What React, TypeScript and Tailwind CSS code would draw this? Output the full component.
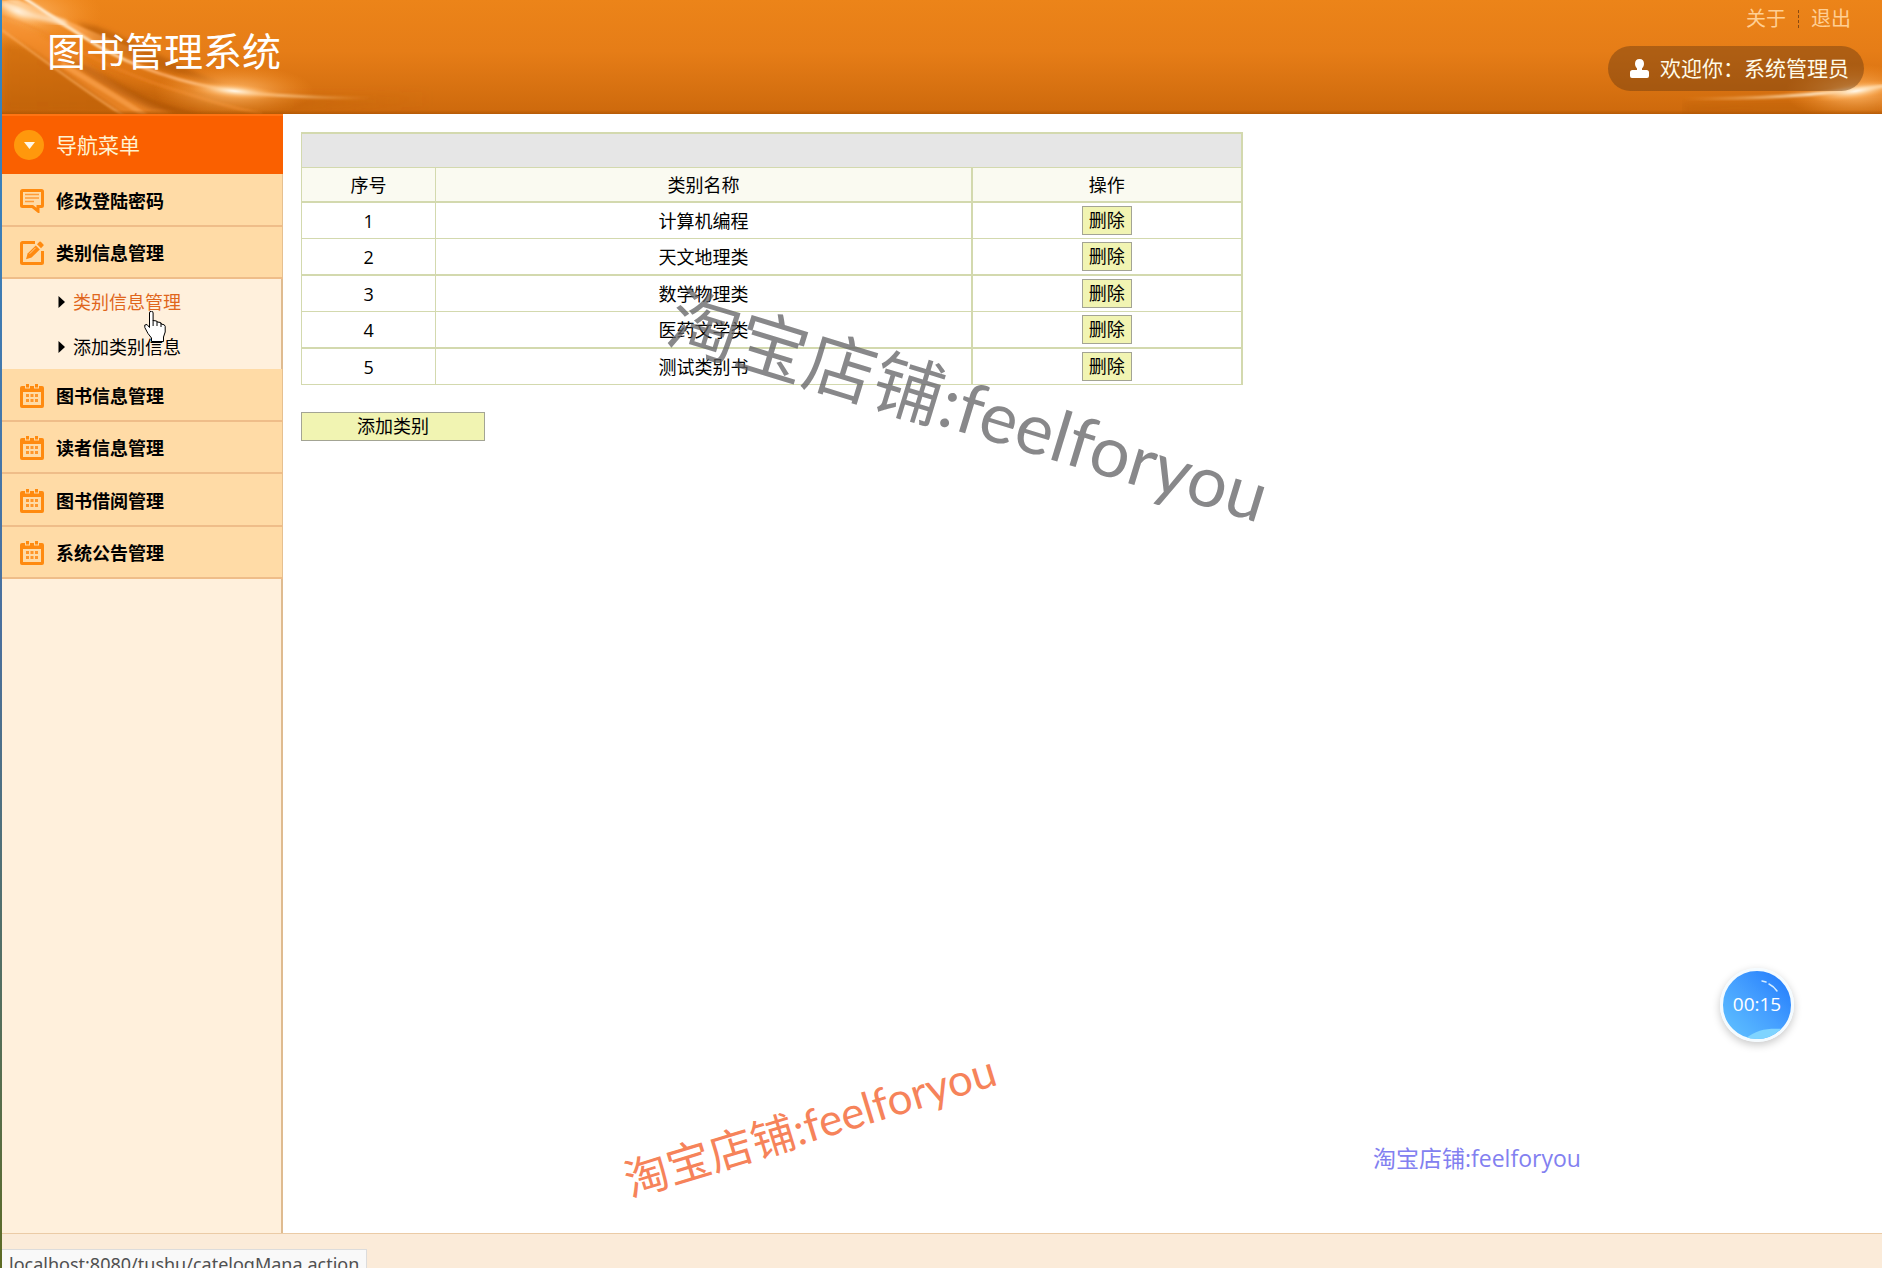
import React, { useState } from "react";

interface SubItem {
  label: string,
  href: string
}

interface MenuEntry {
  label: string,
  icon: React.ReactNode,
  children?: SubItem[]
}

interface Category {
  id: number,
  name: string
}

const NoteIcon: React.FC = () => (
  <svg viewBox="0 0 24 24" className="size-6 shrink-0" aria-hidden="true">
    <path d="M2.5 1.5h19a1 1 0 0 1 1 1v14a1 1 0 0 1-1 1H18v4.5l-5.5-4.5h-10a1 1 0 0 1-1-1v-14a1 1 0 0 1 1-1z" fill="none" stroke="#ff8a0f" strokeWidth="3" />
    <path d="M5 5.5h14M5 9h14M5 12.5h9" stroke="#ff9c38" strokeWidth="1.4" />
  </svg>
);

const EditIcon: React.FC = () => (
  <svg viewBox="0 0 24 24" className="size-6 shrink-0" aria-hidden="true">
    <path d="M15 1.5H2.5a1 1 0 0 0-1 1v19a1 1 0 0 0 1 1h19a1 1 0 0 0 1-1V10" fill="none" stroke="#ff8a0f" strokeWidth="3" />
    <path d="M6 18.2l1.6-5.6 8.2-8.2 4 4-8.2 8.2z" fill="#ff8a0f" />
    <path d="M17 3.2l2.4-2.4a1 1 0 0 1 1.4 0L23.4 3.4a1 1 0 0 1 0 1.4L21 7.2z" fill="#ff8a0f" />
    <path d="M9.6 12.8l6-6" stroke="#ffdba6" strokeWidth="0.8" />
  </svg>
);

const CalendarIcon: React.FC = () => (
  <svg viewBox="0 0 24 24" className="size-6 shrink-0" aria-hidden="true">
    <path fillRule="evenodd" d="M0 4a2 2 0 0 1 2-2h3v2.500h5V2h4v2.500h5V2h3a2 2 0 0 1 2 2v18a2 2 0 0 1-2 2H2a2 2 0 0 1-2-2zM3 8v13h18V8z" fill="#ff8a0f" />
    <path d="M6 0h3v3.500H6zM15 0h3v3.500h-3z" fill="#ff8a0f" />
    <path d="M6 10h3v3H6zM10.500 10h3v3h-3zM15 10h3v3h-3zM6 15h3v3H6zM10.500 15h3v3h-3zM15 15h3v3h-3z" fill="#ff962a" />
  </svg>
);

const menu: MenuEntry[] = [
  { label: "修改登陆密码", icon: <NoteIcon /> },
  {
    label: "类别信息管理",
    icon: <EditIcon />,
    children: [
      { label: "类别信息管理", href: "#catelogMana" },
      { label: "添加类别信息", href: "#catelogAdd" },
    ],
  },
  { label: "图书信息管理", icon: <CalendarIcon /> },
  { label: "读者信息管理", icon: <CalendarIcon /> },
  { label: "图书借阅管理", icon: <CalendarIcon /> },
  { label: "系统公告管理", icon: <CalendarIcon /> },
];

const initialCategories: Category[] = [
  { id: 1, name: "计算机编程" },
  { id: 2, name: "天文地理类" },
  { id: 3, name: "数学物理类" },
  { id: 4, name: "医药文学类" },
  { id: 5, name: "测试类别书" },
];

const HeaderArt: React.FC = () => (
  <>
    <svg viewBox="0 0 480 114" className="absolute left-0 top-0 h-full w-[480px]" aria-hidden="true">
      <defs>
        <radialGradient id="flare">
          <stop offset="0" stopColor="#fff8ec" />
          <stop offset="0.3" stopColor="#ffdcae" stopOpacity="0.8" />
          <stop offset="1" stopColor="#ff9a30" stopOpacity="0" />
        </radialGradient>
        <radialGradient id="glow">
          <stop offset="0" stopColor="#ffc07a" stopOpacity="0.9" />
          <stop offset="1" stopColor="#ff9a30" stopOpacity="0" />
        </radialGradient>
        <linearGradient id="streak" x1="0" x2="1">
          <stop offset="0" stopColor="#fff2dd" />
          <stop offset="0.25" stopColor="#ffd7a4" />
          <stop offset="0.4" stopColor="#f9a55a" />
          <stop offset="0.62" stopColor="#fff4e2" />
          <stop offset="1" stopColor="#ffb050" stopOpacity="0" />
        </linearGradient>
        <linearGradient id="beam" x1="0" x2="1" y1="0" y2="0.6">
          <stop offset="0" stopColor="#ffdfb6" />
          <stop offset="0.45" stopColor="#ffab58" stopOpacity="0.8" />
          <stop offset="1" stopColor="#f08c2c" stopOpacity="0" />
        </linearGradient>
        <linearGradient id="streakRight" x1="0" x2="1">
          <stop offset="0" stopColor="#ffb050" stopOpacity="0" />
          <stop offset="0.7" stopColor="#fff0d8" />
          <stop offset="1" stopColor="#ffe3bd" />
        </linearGradient>
        <linearGradient id="shade" x1="0" x2="1">
          <stop offset="0" stopColor="#a85200" stopOpacity="0.3" />
          <stop offset="0.5" stopColor="#a85200" stopOpacity="0.35" />
          <stop offset="1" stopColor="#b86000" stopOpacity="0" />
        </linearGradient>
        <filter id="soft1"><feGaussianBlur stdDeviation="0.8" /></filter>
        <filter id="soft2"><feGaussianBlur stdDeviation="2" /></filter>
        <filter id="soft4"><feGaussianBlur stdDeviation="5" /></filter>
      </defs>
      <path d="M0 34C60 62 130 98 230 96 300 97 380 96 430 90L430 106 200 114 0 114z" fill="url(#shade)" filter="url(#soft4)" />
      <path d="M74 22C110 26 140 50 230 88L160 70 100 46z" fill="#a04c00" fillOpacity="0.45" filter="url(#soft2)" />
      <ellipse cx="20" cy="14" rx="80" ry="36" fill="url(#glow)" />
      <path d="M0 18C44 34 84 62 110 82 130 96 150 106 172 114L120 114C80 86 40 54 0 30z" fill="#f58f2c" fillOpacity="0.7" filter="url(#soft2)" />
      <path d="M60 56C90 62 110 84 160 104L200 114 150 110C110 92 84 74 60 56z" fill="#984600" fillOpacity="0.4" filter="url(#soft2)" />
      <path d="M0 30C44 62 84 92 122 116" fill="none" stroke="#ffb36a" strokeOpacity="0.7" strokeWidth="2" filter="url(#soft1)" />
      <path d="M60 64C90 82 116 98 144 116" fill="none" stroke="#ffaa58" strokeOpacity="0.55" strokeWidth="5" filter="url(#soft1)" />
      <path d="M0 16C50 30 90 66 180 92 210 102 230 108 260 114" fill="none" stroke="#f0872a" strokeOpacity="0.5" strokeWidth="3" filter="url(#soft1)" />
      <path d="M16 0C50 14 95 34 140 52 160 62 172 70 180 76 130 62 90 42 56 24L4 0z" fill="url(#beam)" filter="url(#soft1)" />
      <path d="M22 -2C40 10 64 26 96 46 130 66 180 84 232 91 280 97 320 98 370 98" fill="none" stroke="url(#streak)" strokeWidth="3" filter="url(#soft1)" />
      <ellipse cx="16" cy="11" rx="34" ry="13" fill="url(#flare)" transform="rotate(22 16 11)" />
      <path d="M0 3C20 13 40 19 64 23" fill="none" stroke="#ffe8ca" strokeWidth="4" filter="url(#soft2)" />
      <ellipse cx="232" cy="91" rx="80" ry="26" fill="url(#glow)" />
      <ellipse cx="232" cy="91" rx="46" ry="8" fill="url(#flare)" transform="rotate(5 232 91)" />
    </svg>
    <svg viewBox="0 0 200 114" className="absolute right-0 top-0 h-full w-[200px]" aria-hidden="true">
      <path d="M0 104C80 100 150 104 200 100L200 114 0 114z" fill="#a85200" fillOpacity="0.3" filter="url(#soft4)" />
      <ellipse cx="172" cy="92" rx="70" ry="28" fill="url(#glow)" />
      <path d="M0 99C80 99 150 94 202 86" fill="none" stroke="url(#streakRight)" strokeWidth="3" filter="url(#soft1)" />
      <ellipse cx="174" cy="91" rx="46" ry="9" fill="url(#flare)" transform="rotate(-8 174 91)" />
    </svg>
  </>
);

const Header: React.FC = () => (
  <header className="relative h-[114px] shrink-0 overflow-hidden bg-linear-to-b from-[#ec8419] via-[#e67d17] via-45% to-[#cd690c]">
    <HeaderArt />
    <div className="absolute inset-x-0 bottom-0 h-1 bg-linear-to-b from-transparent to-[#a65000]/60" />
    <div className="relative flex justify-between pl-[45px] pr-[18px]">
      <h1 className="pt-[27px] text-[39px] leading-[48px] text-white">图书管理系统</h1>
      <div className="flex flex-col items-end">
        <nav className="flex h-[38px] items-center pr-[13px] text-xl text-[#ffcf94]">
          <a href="#about">关于</a>
          <span className="mx-3 h-[18px] border-l border-dashed border-[#8a4a10]" />
          <a href="#logout">退出</a>
        </nav>
        <div className="mt-2 flex h-[45px] items-center gap-[11px] rounded-full bg-[#6a3a10]/45 pl-[22px] pr-[15px] text-[21px] text-[#fffbe8]">
          <svg viewBox="0 0 19 19" className="size-[19px]" aria-hidden="true">
            <path d="M9.500 0C12.500 0 14 2 14 4.800 14 7 13 8.500 12 9.500V11h4.500A2.500 2.500 0 0 1 19 13.500V17a2 2 0 0 1-2 2H2a2 2 0 0 1-2-2v-3.500A2.500 2.500 0 0 1 2.500 11H7V9.500C6 8.500 5 7 5 4.800 5 2 6.500 0 9.500 0z" fill="#fff" />
          </svg>
          <span>欢迎你：系统管理员</span>
        </div>
      </div>
    </div>
  </header>
);

const Sidebar: React.FC = () => {
  const [active, setActive] = useState<string>("#catelogMana");

  return (
    <aside className="w-[281px] shrink-0 border-r-2 border-[#dfbb90] bg-[#fff0dc]">
      <div className="-mr-0.5">
        <div className="flex h-[60px] items-center gap-3 border-t-2 border-[#ff7413] bg-[#fa6000] pl-3 text-[21px] text-[#fff3d0]">
          <span className="flex size-[30px] items-center justify-center rounded-full bg-[#ff980c]">
            <svg viewBox="0 0 11 7" className="h-[7px] w-[11px]" aria-hidden="true">
              <path d="M0 0h11L5.500 7z" fill="#fff8e8" />
            </svg>
          </span>
          <h2>导航菜单</h2>
        </div>
        <ul>
          {menu.map((entry) => (
            <li key={entry.label} className="group">
              <button
                type="button"
                className="flex w-full items-center gap-3 border-b-2 border-r border-b-[#efbd89] border-r-[#e6c090] bg-[#ffdba6] pl-[18px] pt-0.5 text-lg font-bold text-black group-odd:h-[53px] group-even:h-[52px]"
              >
                {entry.icon}
                {entry.label}
              </button>
              {entry.children && (
                <ul className="mr-0.5">
                  {entry.children.map((child) => (
                    <li key={child.href} className="flex h-[45px] items-center gap-2 pl-14">
                      <svg viewBox="0 0 7 12" className="h-3 w-[7px]" aria-hidden="true">
                        <path d="M0.500 0L7 6 0.500 12z" fill="#000" />
                      </svg>
                      <a
                        href={child.href}
                        onClick={() => setActive(child.href)}
                        className={active === child.href ? "text-[#e0661c]" : "text-black"}
                      >
                        {child.label}
                      </a>
                    </li>
                  ))}
                </ul>
              )}
            </li>
          ))}
        </ul>
      </div>
    </aside>
  );
};

const CategoryTable: React.FC = () => {
  const [categories, setCategories] = useState<Category[]>(initialCategories);

  const handleDelete = (id: number) => {
    setCategories(categories.filter((c) => c.id !== id));
  };

  return (
    <table className="w-3/5 table-fixed border-separate border-spacing-0 border-l border-r-2 border-t-2 border-[#d3d9ae] text-center">
      <colgroup>
        <col className="w-1/7" />
        <col className="w-4/7" />
        <col className="w-2/7" />
      </colgroup>
      <thead>
        <tr>
          <td colSpan={3} className="h-[34px] border-b border-[#d3d9ae] bg-[#e6e6e6] p-0" />
        </tr>
        <tr className="bg-[#fafaf1]">
          <th className="h-[35px] border-b-2 border-r border-[#d3d9ae] p-0 font-normal">序号</th>
          <th className="border-b-2 border-r-2 border-[#d3d9ae] p-0 font-normal">类别名称</th>
          <th className="border-b-2 border-[#d3d9ae] p-0 font-normal">操作</th>
        </tr>
      </thead>
      <tbody>
        {categories.map((c) => (
          <tr key={c.id} className="group">
            <td className="border-r border-[#d3d9ae] p-0 group-odd:h-9 group-odd:border-b group-even:h-[37px] group-even:border-b-2">{c.id}</td>
            <td className="border-r-2 border-[#d3d9ae] p-0 group-odd:border-b group-even:border-b-2">{c.name}</td>
            <td className="border-[#d3d9ae] p-0 group-odd:border-b group-even:border-b-2">
              <button
                type="button"
                onClick={() => handleDelete(c.id)}
                className="mx-auto block h-[29px] border border-[#a3a494] bg-[#f1f4b2] px-1.5 leading-[27px]"
              >
                删除
              </button>
            </td>
          </tr>
        ))}
      </tbody>
    </table>
  );
};

const HandCursor: React.FC = () => (
  <svg viewBox="0 0 22 31" className="pointer-events-none absolute left-[144px] top-[311px] h-[31px] w-[22px]" aria-hidden="true">
    <path d="M7.500 30.500V27L4 22.500 0.800 16.500 0.800 14 3 13.500 5.500 16.500V2a1.800 1.800 0 0 1 3.600 0V9.500l3.600.5.500 1 3.500.5.500 1.500 3 .8 1 1.500V21L19.500 26v4.500z" fill="#fff" stroke="#000" strokeWidth="1" />
    <path d="M9.100 9v6M13 10.500V15M17 12v4" stroke="#000" strokeWidth="1" />
  </svg>
);

const RecordTimer: React.FC = () => (
  <div className="absolute left-[1720px] top-[968px] flex size-[74px] items-center justify-center overflow-hidden rounded-full border-3 border-[#f4fbff] bg-linear-to-tr from-[#62c4ff] via-[#46a0ff] to-[#1f77fb] text-[19px] text-white shadow-[0_3px_8px_rgba(0,0,0,0.22)]">
    <svg viewBox="0 0 68 68" className="absolute inset-0 size-full" aria-hidden="true">
      <path d="M22 68C34 58 46 57 60 58L60 68z" fill="#7fd4ff" />
      <path d="M39 10l4 1M46 13c4 2 6 4 8 7" fill="none" stroke="#d5ecff" strokeWidth="1.500" strokeLinecap="round" />
    </svg>
    <span className="relative">00:15</span>
  </div>
);

const Home: React.FC = () => {
  return (
    <div className="relative flex h-screen overflow-hidden bg-white font-['Open_Sans','Noto_Sans_CJK_SC',sans-serif] text-lg text-black">
      <div className="w-0.5 shrink-0 bg-linear-to-b from-[#2f86c6] via-[#4a6f9c] via-50% to-[#5d6b22]" />
      <div className="flex min-w-0 flex-1 flex-col">
        <Header />
        <div className="flex min-h-0 flex-1">
          <Sidebar />
          <main className="min-w-0 flex-1 pl-[18px] pr-[11px] pt-[18px]">
            <CategoryTable />
            <button
              type="button"
              className="mt-[27px] block h-[29px] w-[184px] border border-[#a3a494] bg-[#f1f4b2] leading-[27px]"
            >
              添加类别
            </button>
          </main>
        </div>
        <footer className="h-[35px] shrink-0 border-t border-[#ebcba6] bg-[#fbebd9]" />
      </div>

      <div className="absolute left-0.5 top-[1249px] whitespace-nowrap border-r border-t border-[#dcdcdc] bg-[#f9f9f9] px-[7px] font-['Noto_Sans',sans-serif] text-lg leading-7 text-[#505050]">
        localhost:8080/tushu/catelogMana.action
      </div>

      <HandCursor />
      <RecordTimer />

      <div className="pointer-events-none absolute left-[683px] top-[277px] origin-top-left rotate-[17deg] whitespace-nowrap font-['Lato','Noto_Sans_CJK_SC',sans-serif] text-[71px] font-normal leading-[80px] text-[#606063]/75">
        淘宝店铺:feelforyou
      </div>
      <div className="pointer-events-none absolute left-[618px] top-[1157px] origin-top-left -rotate-[17deg] whitespace-nowrap font-['Lato','Noto_Sans_CJK_SC',sans-serif] text-[44px] font-normal leading-[50px] text-[#f6835a]">
        淘宝店铺:feelforyou
      </div>
      <div className="pointer-events-none absolute left-[1373px] top-[1142px] whitespace-nowrap text-[23px] leading-8 text-[#8280f0]">
        淘宝店铺:feelforyou
      </div>
    </div>
  );
};

export default Home;
